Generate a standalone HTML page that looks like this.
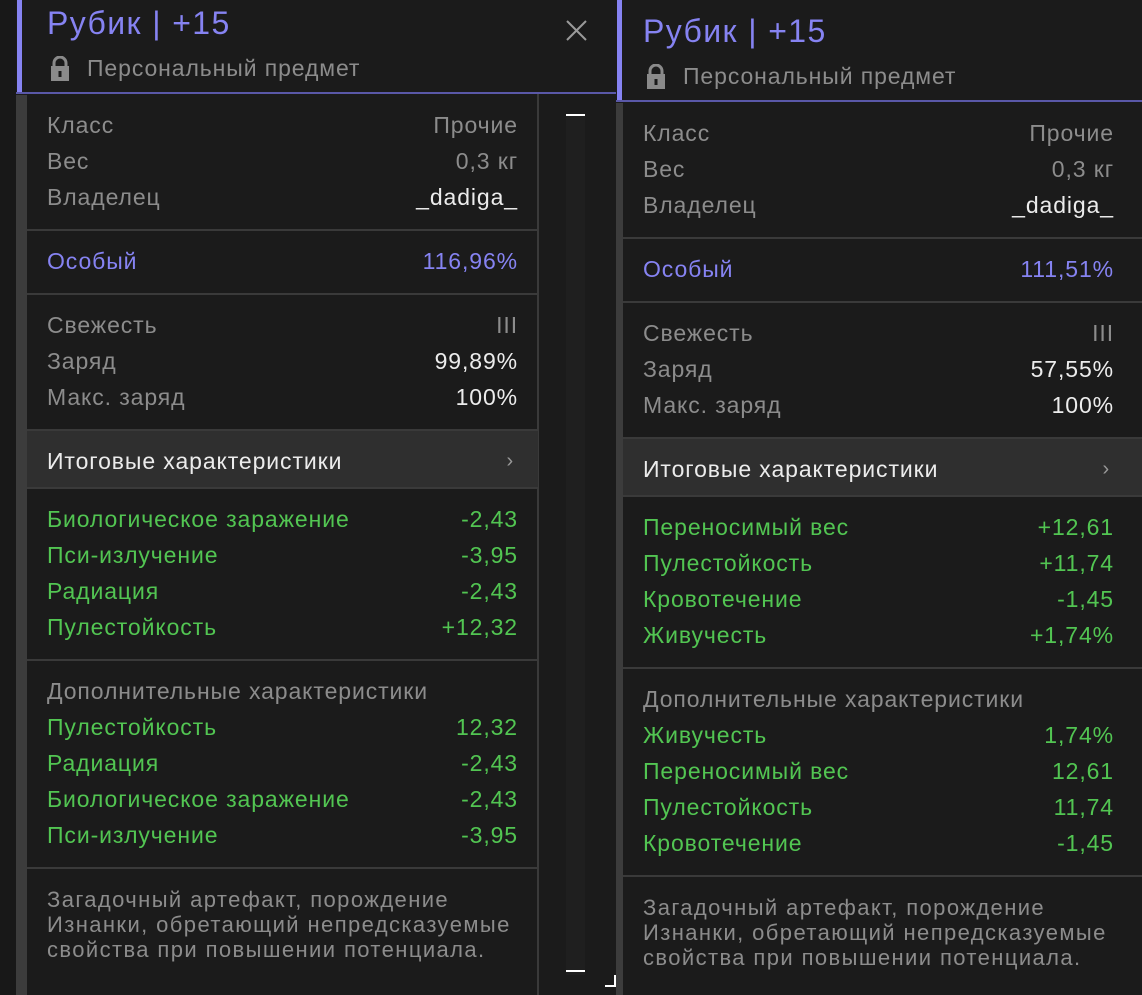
<!DOCTYPE html>
<html><head><meta charset="utf-8"><style>
*{margin:0;padding:0;box-sizing:border-box}
body{width:1142px;height:995px;background:#181818;position:relative;overflow:hidden;font-family:"Liberation Sans",sans-serif;font-size:23px;letter-spacing:0.9px;color:#8c8c8c}
.a{position:absolute}
.r{position:absolute;height:36px;line-height:36px;display:flex;justify-content:space-between;white-space:nowrap}
.L .r{left:47px;width:471px}
.R .r{left:643px;width:471px}
.g{color:#52c552}.w{color:#ececec}.p{color:#8683f2}
.hr{position:absolute;height:2px;background:#3a3a3a}
.desc{position:absolute;font-size:22px;letter-spacing:1.4px;line-height:25px;color:#8c8c8c;white-space:nowrap}
</style></head><body>
<!-- LEFT PANEL -->
<div class="a" style="left:16px;top:0;width:600px;height:995px;background:#1b1b1b"></div>
<div class="a" style="left:16px;top:95px;width:11px;height:900px;background:#3c3c3c"></div>
<div class="a" style="left:17px;top:0;width:5px;height:93px;background:#8683f2"></div>
<div class="a" style="left:16px;top:92px;width:600px;height:2px;background:#5a58a8"></div>
<div class="a" style="left:537px;top:94px;width:2px;height:901px;background:#3a3a3a"></div>
<div class="a" style="left:566px;top:115px;width:19px;height:860px;background:#1f1f1f"></div>
<div class="a" style="left:566px;top:114px;width:19px;height:2px;background:#fff"></div>
<div class="a" style="left:566px;top:970px;width:19px;height:2px;background:#fff"></div>
<div class="a" style="left:605px;top:985px;width:11px;height:2px;background:#fff"></div>
<div class="a" style="left:614px;top:975px;width:2px;height:12px;background:#fff"></div>
<div class="a p" style="left:47px;top:3px;font-size:32px;letter-spacing:1.4px;line-height:40px">Рубик | +15</div>
<svg class="a" style="left:566px;top:20px" width="21" height="21" viewBox="0 0 21 21"><path d="M1 1L20 20M20 1L1 20" stroke="#9a9a9a" stroke-width="2"/></svg>
<svg class="a" style="left:50px;top:56px" width="20" height="25" viewBox="0 0 20 25"><path d="M4 11V7a6 6 0 0 1 12 0v4" fill="none" stroke="#8a8a8a" stroke-width="3"/><rect x="1" y="10" width="18" height="15" fill="#8a8a8a"/><rect x="8.5" y="15" width="3" height="6" fill="#1b1b1b"/></svg>
<div class="a" style="left:87px;top:55px;line-height:26px">Персональный предмет</div>
<div class="L">
<div class="r" style="top:107px"><span>Класс</span><span>Прочие</span></div>
<div class="r" style="top:143px"><span>Вес</span><span>0,3 кг</span></div>
<div class="r" style="top:179px"><span>Владелец</span><span class="w">_dadiga_</span></div>
<div class="hr" style="left:27px;top:229px;width:511px"></div>
<div class="r p" style="top:243px"><span>Особый</span><span>116,96%</span></div>
<div class="hr" style="left:27px;top:293px;width:511px"></div>
<div class="r" style="top:307px"><span>Свежесть</span><span>III</span></div>
<div class="r" style="top:343px"><span>Заряд</span><span class="w">99,89%</span></div>
<div class="r" style="top:379px"><span>Макс. заряд</span><span class="w">100%</span></div>
<div class="a" style="left:27px;top:429px;width:511px;height:60px;background:#2f2f2f;border-top:2px solid #3a3a3a;border-bottom:2px solid #3a3a3a"></div>
<div class="r w" style="top:443px"><span>Итоговые характеристики</span><span style="color:#999;font-size:20px;padding-right:4px">&#x203A;</span></div>
<div class="r g" style="top:501px"><span>Биологическое заражение</span><span>-2,43</span></div>
<div class="r g" style="top:537px"><span>Пси-излучение</span><span>-3,95</span></div>
<div class="r g" style="top:573px"><span>Радиация</span><span>-2,43</span></div>
<div class="r g" style="top:609px"><span>Пулестойкость</span><span>+12,32</span></div>
<div class="hr" style="left:27px;top:659px;width:511px"></div>
<div class="r" style="top:673px"><span>Дополнительные характеристики</span><span></span></div>
<div class="r g" style="top:709px"><span>Пулестойкость</span><span>12,32</span></div>
<div class="r g" style="top:745px"><span>Радиация</span><span>-2,43</span></div>
<div class="r g" style="top:781px"><span>Биологическое заражение</span><span>-2,43</span></div>
<div class="r g" style="top:817px"><span>Пси-излучение</span><span>-3,95</span></div>
<div class="hr" style="left:27px;top:867px;width:511px"></div>
<div class="desc" style="left:47px;top:887px">Загадочный артефакт, порождение<br>Изнанки, обретающий непредсказуемые<br>свойства при повышении потенциала.</div>
</div>
<!-- RIGHT PANEL -->
<div class="a" style="left:616px;top:0;width:526px;height:995px;background:#1b1b1b"></div>
<div class="a" style="left:616px;top:103px;width:7px;height:892px;background:#3c3c3c"></div>
<div class="a" style="left:617px;top:0;width:5px;height:101px;background:#8683f2"></div>
<div class="a" style="left:616px;top:100px;width:526px;height:2px;background:#5a58a8"></div>
<div class="a p" style="left:643px;top:11px;font-size:32px;letter-spacing:1.4px;line-height:40px">Рубик | +15</div>
<svg class="a" style="left:646px;top:64px" width="20" height="25" viewBox="0 0 20 25"><path d="M4 11V7a6 6 0 0 1 12 0v4" fill="none" stroke="#8a8a8a" stroke-width="3"/><rect x="1" y="10" width="18" height="15" fill="#8a8a8a"/><rect x="8.5" y="15" width="3" height="6" fill="#1b1b1b"/></svg>
<div class="a" style="left:683px;top:63px;line-height:26px">Персональный предмет</div>
<div class="R">
<div class="r" style="top:115px"><span>Класс</span><span>Прочие</span></div>
<div class="r" style="top:151px"><span>Вес</span><span>0,3 кг</span></div>
<div class="r" style="top:187px"><span>Владелец</span><span class="w">_dadiga_</span></div>
<div class="hr" style="left:623px;top:237px;width:519px"></div>
<div class="r p" style="top:251px"><span>Особый</span><span>111,51%</span></div>
<div class="hr" style="left:623px;top:301px;width:519px"></div>
<div class="r" style="top:315px"><span>Свежесть</span><span>III</span></div>
<div class="r" style="top:351px"><span>Заряд</span><span class="w">57,55%</span></div>
<div class="r" style="top:387px"><span>Макс. заряд</span><span class="w">100%</span></div>
<div class="a" style="left:623px;top:437px;width:519px;height:60px;background:#2f2f2f;border-top:2px solid #3a3a3a;border-bottom:2px solid #3a3a3a"></div>
<div class="r w" style="top:451px"><span>Итоговые характеристики</span><span style="color:#999;font-size:20px;padding-right:4px">&#x203A;</span></div>
<div class="r g" style="top:509px"><span>Переносимый вес</span><span>+12,61</span></div>
<div class="r g" style="top:545px"><span>Пулестойкость</span><span>+11,74</span></div>
<div class="r g" style="top:581px"><span>Кровотечение</span><span>-1,45</span></div>
<div class="r g" style="top:617px"><span>Живучесть</span><span>+1,74%</span></div>
<div class="hr" style="left:623px;top:667px;width:519px"></div>
<div class="r" style="top:681px"><span>Дополнительные характеристики</span><span></span></div>
<div class="r g" style="top:717px"><span>Живучесть</span><span>1,74%</span></div>
<div class="r g" style="top:753px"><span>Переносимый вес</span><span>12,61</span></div>
<div class="r g" style="top:789px"><span>Пулестойкость</span><span>11,74</span></div>
<div class="r g" style="top:825px"><span>Кровотечение</span><span>-1,45</span></div>
<div class="hr" style="left:623px;top:875px;width:519px"></div>
<div class="desc" style="left:643px;top:895px">Загадочный артефакт, порождение<br>Изнанки, обретающий непредсказуемые<br>свойства при повышении потенциала.</div>
</div>
</body></html>
